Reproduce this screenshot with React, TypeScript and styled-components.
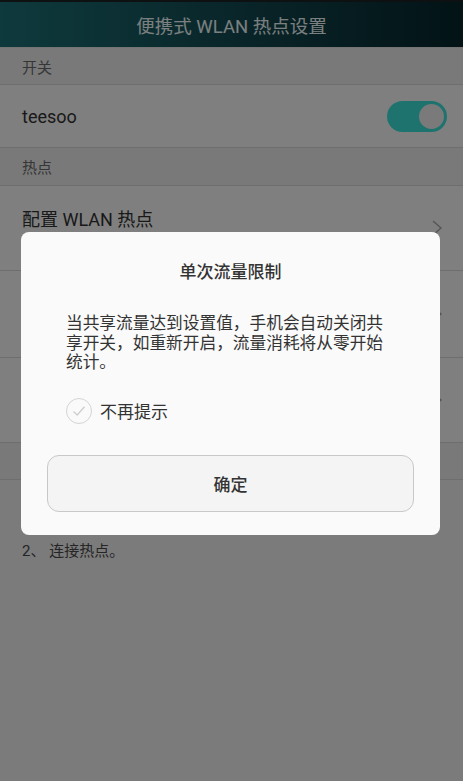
import styled, { createGlobalStyle } from 'styled-components'

const GlobalStyle = createGlobalStyle`
  html, body {
    margin: 0;
    padding: 0;
    background: #f6f6f6;
    font-family: Roboto, "Noto Sans CJK SC", "Noto Sans", sans-serif;
  }
  * { box-sizing: border-box; }
`

const Screen = styled.div`
  position: relative;
  width: 463px;
  height: 781px;
  overflow: hidden;
  background: #f6f6f6;
`

const Header = styled.div`
  height: 48px;
  border-top: 2px solid #1a2224;
  background: linear-gradient(90deg, #1d747a 0%, #124850 55%, #06262c 100%);
  display: flex;
  align-items: center;
  justify-content: center;
  color: #f4ffff;
  font-size: 18.5px;
  border-bottom: 1px solid #e8e8e8;
`

const SectionHeader = styled.div<{ $height: number }>`
  height: ${({ $height }) => $height}px;
  background: #f2f2f2;
  border-bottom: 1px solid #dcdcdc;
  display: flex;
  align-items: center;
  padding-left: 22px;
  font-size: 15px;
  color: #6c6c6c;
`

const Row = styled.div<{ $height: number }>`
  height: ${({ $height }) => $height}px;
  background: #ffffff;
  border-bottom: 1px solid #dcdcdc;
  display: flex;
  align-items: center;
  justify-content: space-between;
  padding: 0 20px 0 22px;
`

const RowText = styled.div`
  display: flex;
  flex-direction: column;
  gap: 4px;
`

const RowTitle = styled.div`
  font-size: 18px;
  color: #333333;
`

const RowSub = styled.div`
  font-size: 14px;
  color: #8a8a8a;
`

const Chevron = styled.svg`
  width: 12px;
  height: 18px;
  flex-shrink: 0;
`

const Toggle = styled.div`
  width: 60px;
  height: 31px;
  border-radius: 16px;
  background: #3ee6df;
  display: flex;
  align-items: center;
  justify-content: flex-end;
  padding-right: 3px;
  margin-right: -4px;
`

const Knob = styled.div`
  width: 25px;
  height: 25px;
  border-radius: 50%;
  background: #f4f4f4;
`

const Notes = styled.div`
  padding: 20px 22px;
  display: flex;
  flex-direction: column;
  gap: 18px;
  font-size: 15px;
  color: #4a4a4a;
`

const Overlay = styled.div`
  position: absolute;
  inset: 0;
  background: rgba(0, 0, 0, 0.5);
  display: flex;
  justify-content: center;
  align-items: flex-start;
  padding-top: 232px;
`

const Dialog = styled.div`
  width: 419px;
  margin-left: -2px;
  background: #fafafa;
  border-radius: 8px;
  padding: 28px 26px 23px;
  display: flex;
  flex-direction: column;
  font-family: "Noto Sans CJK SC", "Noto Sans", sans-serif;
`

const DialogTitle = styled.div`
  text-align: center;
  font-size: 17px;
  line-height: 22px;
  font-weight: 500;
  color: #333333;
`

const DialogBody = styled.div`
  margin: 31px 16px 0 19px;
  font-size: 16.7px;
  line-height: 19.6px;
  color: #333333;
`

const CheckRow = styled.label`
  margin: 25px 0 0 19px;
  display: flex;
  align-items: center;
  gap: 8px;
  height: 28px;
  font-size: 17px;
  color: #333333;
`

const CheckCircle = styled.span`
  width: 26px;
  height: 26px;
  border-radius: 50%;
  border: 1.5px solid #d4d4d4;
  display: flex;
  align-items: center;
  justify-content: center;
`

const ConfirmButton = styled.button`
  margin-top: 30px;
  height: 57px;
  border-radius: 12px;
  border: 1px solid #c8c8c8;
  background: #f4f4f4;
  font-family: inherit;
  font-size: 17px;
  font-weight: 500;
  color: #333333;
`

function ChevronIcon() {
  return (
    <Chevron viewBox="0 0 12 18">
      <path d="M2 2 L10 9 L2 16" fill="none" stroke="#aaaaaa" strokeWidth="1.4" />
    </Chevron>
  )
}

export default function App() {
  return (
    <Screen>
      <GlobalStyle />
      <Header>便携式 WLAN 热点设置</Header>
      <SectionHeader $height={37}>开关</SectionHeader>
      <Row $height={63}>
        <RowTitle>teesoo</RowTitle>
        <Toggle>
          <Knob />
        </Toggle>
      </Row>
      <SectionHeader $height={38}>热点</SectionHeader>
      <Row $height={85}>
        <RowText>
          <RowTitle>配置 WLAN 热点</RowTitle>
          <RowSub>WPA2 PSK</RowSub>
        </RowText>
        <ChevronIcon />
      </Row>
      <Row $height={87}>
        <RowText>
          <RowTitle>单次流量限制</RowTitle>
          <RowSub>不限制</RowSub>
        </RowText>
        <ChevronIcon />
      </Row>
      <Row $height={85}>
        <RowText>
          <RowTitle>最多连接数</RowTitle>
          <RowSub>8</RowSub>
        </RowText>
        <ChevronIcon />
      </Row>
      <SectionHeader $height={37}>帮助</SectionHeader>
      <Notes>
        <div>1、 开启便携式 WLAN 热点。</div>
        <div>2、 连接热点。</div>
      </Notes>
      <Overlay>
        <Dialog>
          <DialogTitle>单次流量限制</DialogTitle>
          <DialogBody>
            当共享流量达到设置值，手机会自动关闭共享开关，如重新开启，流量消耗将从零开始统计。
          </DialogBody>
          <CheckRow>
            <CheckCircle>
              <svg width="14" height="12" viewBox="0 0 14 12">
                <path d="M1.5 6.5 L5.2 10 L12.5 1.8" fill="none" stroke="#cfcfcf" strokeWidth="1.4" />
              </svg>
            </CheckCircle>
            不再提示
          </CheckRow>
          <ConfirmButton>确定</ConfirmButton>
        </Dialog>
      </Overlay>
    </Screen>
  )
}
